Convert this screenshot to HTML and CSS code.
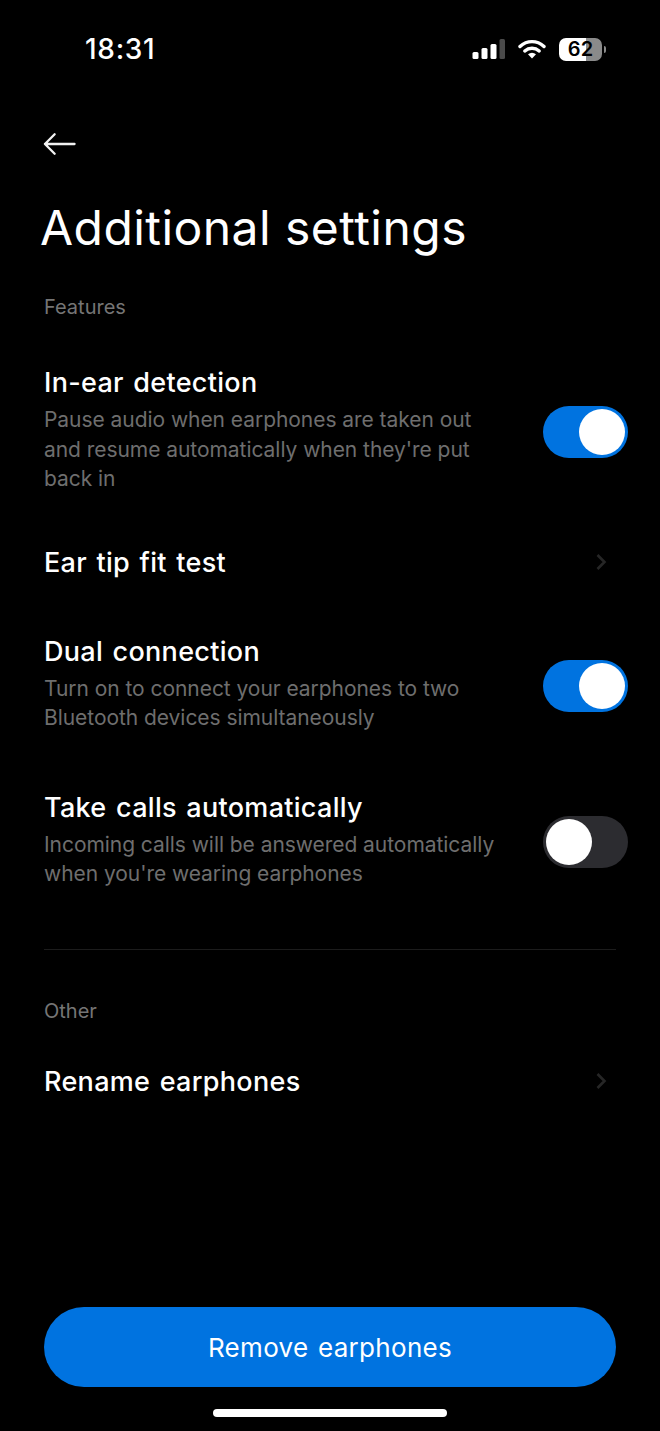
FILE: index.html
```html
<!DOCTYPE html>
<html lang="en">
<head>
<meta charset="utf-8">
<title>Additional settings</title>
<link rel="stylesheet" href="styles.css">
</head>
<body>
<div class="screen">
  <header class="status">
    <span class="time">18:31</span>
    <div class="status-icons">
      <svg class="signal" width="33" height="20" viewBox="0 0 33 20"><rect x="0.500" y="13" width="6" height="7" rx="1.500" fill="#fff"/><rect x="9.500" y="9" width="6" height="11" rx="1.500" fill="#fff"/><rect x="18.500" y="5" width="6" height="15" rx="1.500" fill="#fff"/><rect x="27.500" y="0" width="5.500" height="20" rx="1.500" fill="#4a4a4a"/></svg>
      <svg class="wifi" width="28" height="20" viewBox="0 0 28 20"><path d="M2 7.500C9 1 19 1 26 7.500" fill="none" stroke="#fff" stroke-width="3.400" stroke-linecap="round"/><path d="M6.800 12C11 8.300 17 8.300 21.200 12" fill="none" stroke="#fff" stroke-width="3.400" stroke-linecap="round"/><path d="M10 15.300C12.500 13.300 15.500 13.300 18 15.300L14 19.500Z" fill="#fff"/></svg>
      <div class="battery"><div class="battery-body"><span class="battery-num">62</span></div><span class="battery-cap"></span></div>
    </div>
  </header>

  <nav class="nav">
    <svg width="34" height="24" viewBox="0 0 34 24"><path d="M32.500 12H2M12 2 2 12l10 10" fill="none" stroke="#f2f2f2" stroke-width="2.400" stroke-linecap="round" stroke-linejoin="round"/></svg>
  </nav>

  <h1 class="title">Additional settings</h1>

  <main class="content">
    <h2 class="section">Features</h2>

    <div class="row row-ear">
      <div class="row-text">
        <div class="row-title">In-ear detection</div>
        <p class="row-sub">Pause audio when earphones are taken out and resume automatically when they're put back in</p>
      </div>
      <span class="toggle on"><span class="knob"></span></span>
    </div>

    <div class="row row-link row-fit">
      <div class="row-title">Ear tip fit test</div>
      <svg class="chev" width="12" height="18" viewBox="0 0 12 18"><path d="M2.500 2 9.500 9l-7 7" fill="none" stroke="#262626" stroke-width="2.600"/></svg>
    </div>

    <div class="row row-dual">
      <div class="row-text">
        <div class="row-title">Dual connection</div>
        <p class="row-sub">Turn on to connect your earphones to two Bluetooth devices simultaneously</p>
      </div>
      <span class="toggle on"><span class="knob"></span></span>
    </div>

    <div class="row row-calls">
      <div class="row-text">
        <div class="row-title">Take calls automatically</div>
        <p class="row-sub">Incoming calls will be answered automatically when you're wearing earphones</p>
      </div>
      <span class="toggle"><span class="knob"></span></span>
    </div>

    <hr class="divider">

    <h2 class="section">Other</h2>

    <div class="row row-link row-rename">
      <div class="row-title">Rename earphones</div>
      <svg class="chev" width="12" height="18" viewBox="0 0 12 18"><path d="M2.500 2 9.500 9l-7 7" fill="none" stroke="#262626" stroke-width="2.600"/></svg>
    </div>
  </main>

  <footer class="footer">
    <button class="remove" type="button">Remove earphones</button>
    <div class="home-bar"></div>
  </footer>
</div>
</body>
</html>
```

FILE: styles.css
```css
* { box-sizing: border-box; }
html, body { margin: 0; padding: 0; background: #000; }
body { font-family: Inter, "Liberation Sans", sans-serif; color: #fff; }

.screen {
  width: 660px;
  height: 1431px;
  display: flex;
  flex-direction: column;
  background: #000;
  overflow: hidden;
}

.status {
  height: 98px;
  padding: 32px 54px 0 85px;
  display: flex;
  justify-content: space-between;
  align-items: flex-start;
}
.time { font-size: 28px; line-height: 34px; font-weight: 500; letter-spacing: 0.7px; color: #fff; }
.status-icons { display: flex; align-items: center; gap: 13px; height: 34px; }
.battery { display: flex; align-items: center; gap: 2px; }
.battery-body {
  width: 43px;
  height: 23px;
  border-radius: 7px;
  background: linear-gradient(90deg, #fff 0, #fff 62%, #8a8a8a 62%, #8a8a8a 100%);
  display: flex;
  align-items: center;
  justify-content: center;
}
.battery-num { font-size: 20px; line-height: 23px; font-weight: 600; color: #000; }
.battery-cap { width: 2px; height: 7px; background: #8a8a8a; border-radius: 0 2px 2px 0; }

.nav { height: 24px; margin-top: 34px; padding-left: 43px; }
.nav svg { display: block; width: 33px; height: 24px; }

.title {
  margin: 42px 0 0;
  padding-left: 40px;
  font-size: 48px;
  line-height: 60px;
  font-weight: 400;
  letter-spacing: 0.45px;
  color: #fff;
}

.content { padding: 0 44px; flex: 1; }

.section {
  margin: 0;
  font-size: 20px;
  line-height: 26px;
  font-weight: 400;
  color: #757575;
}
.content > .section:first-child { margin-top: 36px; }

.row {
  display: flex;
  align-items: center;
  justify-content: space-between;
  margin-right: -12px;
}
.row-text { width: 460px; }
.row-title {
  font-size: 27px;
  line-height: 34px;
  font-weight: 500;
  letter-spacing: 0.3px;
  word-spacing: 2px;
  color: #fff;
}
.row-sub {
  margin: 5px 0 0;
  font-size: 21px;
  line-height: 29.5px;
  font-weight: 400;
  letter-spacing: -0.05px;
  color: #6e6e6e;
}

.row-ear { margin-top: 46px; }
.row-fit { margin-top: 52px; }
.row-dual { margin-top: 55px; }
.row-calls { margin-top: 58px; }
.row-rename { margin-top: 41px; }

.row-link { margin-right: 0; height: 34px; }
.chev { margin-right: 9px; margin-top: -2px; }

.toggle {
  flex: none;
  width: 85px;
  height: 52px;
  margin-top: 5px;
  border-radius: 26px;
  background: #2c2c30;
  display: flex;
  align-items: center;
  padding: 0 3px;
}
.toggle.on { background: #0073e0; justify-content: flex-end; }
.knob { width: 46px; height: 46px; border-radius: 50%; background: #fff; display: block; }

.divider { border: 0; height: 1px; background: #1c1c1c; margin: 60px 0 48px; }

.footer { display: flex; flex-direction: column; align-items: center; padding: 0 44px 14px; }
.remove {
  width: 572px;
  height: 80px;
  border: 0;
  border-radius: 40px;
  background: #0073e0;
  color: #fff;
  font-family: inherit;
  font-size: 26px;
  font-weight: 400;
  letter-spacing: 0.3px;
  word-spacing: 2px;
}
.home-bar { width: 234px; height: 8px; margin-top: 22px; border-radius: 4px; background: #fff; }
```
